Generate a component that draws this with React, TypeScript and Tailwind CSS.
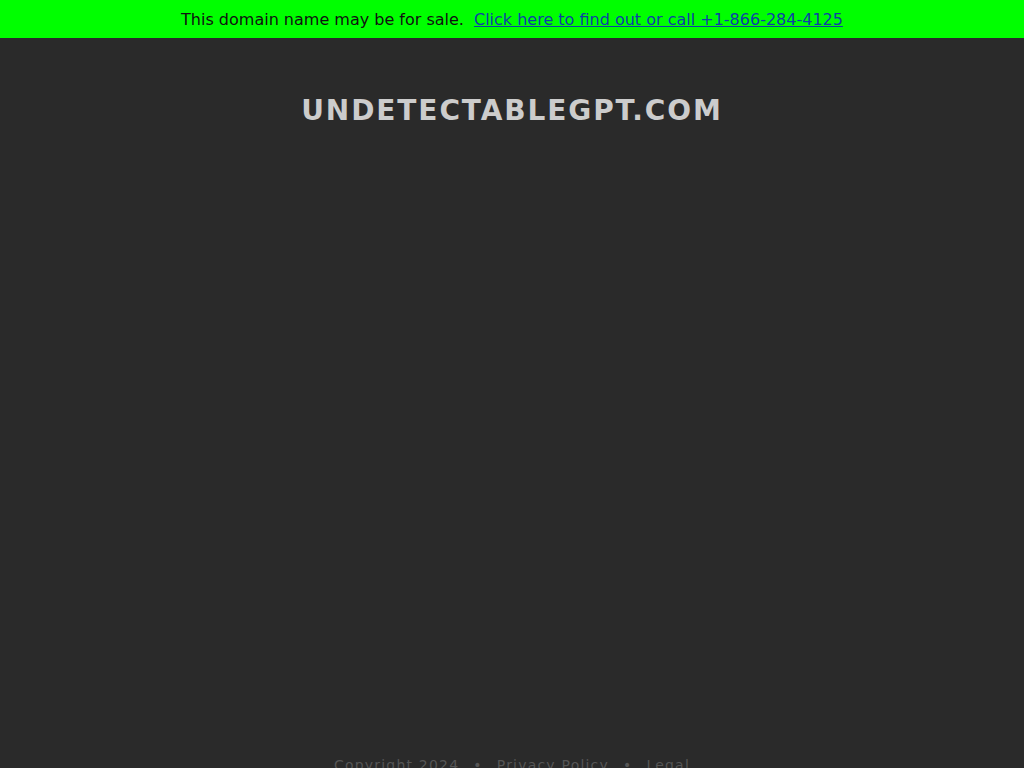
export default function App() {
  return (
    <div className="min-h-screen bg-[#2a2a2a] font-['DejaVu_Sans',sans-serif]">
      {/* Sale banner */}
      <div className="flex h-[38px] items-center justify-center bg-[#00ff00] pt-px text-base text-[#111]">
        <span>This domain name may be for sale.</span>
        <a href="#" className="ml-[10px] text-[#0d3fa6] underline">
          Click here to find out or call +1-866-284-4125
        </a>
      </div>

      {/* Domain title */}
      <div className="flex h-[717px] justify-center pt-[52px]">
        <h1 className="text-[28px] font-bold tracking-[1.9px] text-[#cccccc]">UNDETECTABLEGPT.COM</h1>
      </div>

      {/* Footer */}
      <footer className="flex justify-center pb-6 text-sm tracking-[1.2px] text-[#555555]">
        <span>Copyright 2024</span>
        <span className="mx-[14px]">•</span>
        <a href="#">Privacy Policy</a>
        <span className="mx-[14px]">•</span>
        <a href="#">Legal</a>
      </footer>
    </div>
  );
}
